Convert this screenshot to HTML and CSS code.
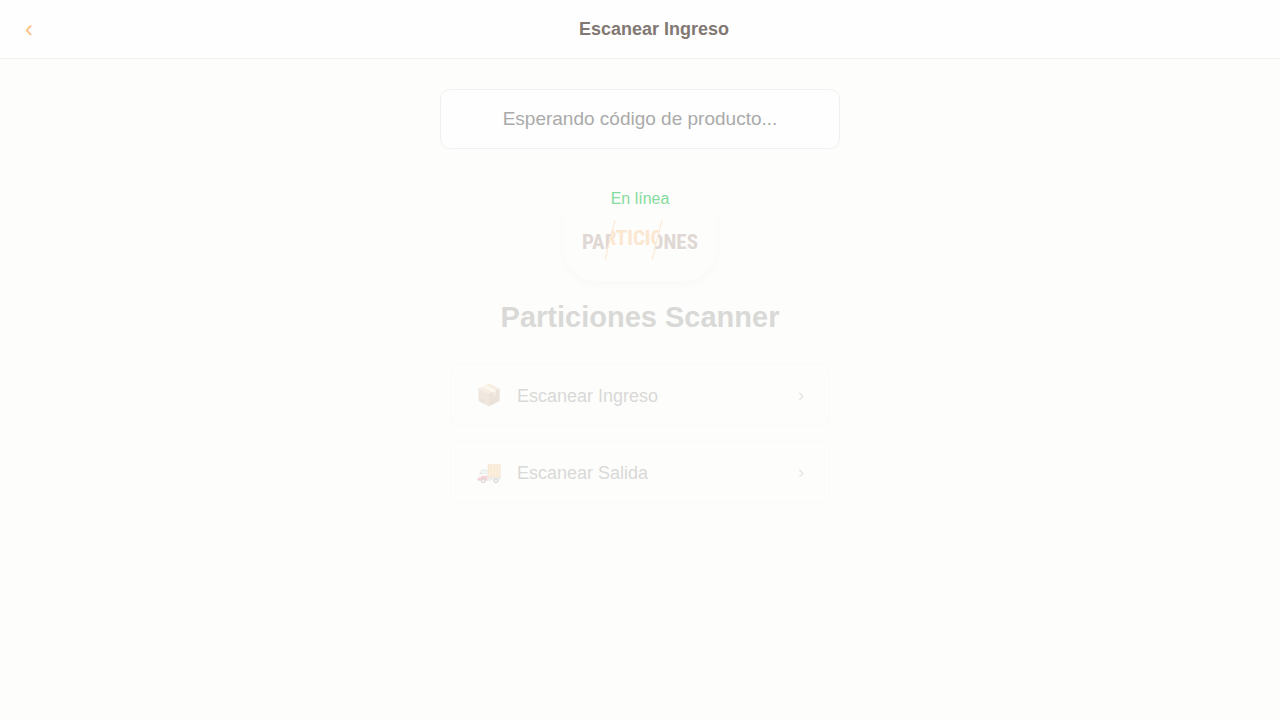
FILE: index.html
```html
<!DOCTYPE html>
<html lang="es">
<head>
<meta charset="utf-8">
<meta name="viewport" content="width=device-width, initial-scale=1">
<title>Escanear Ingreso</title>
<link rel="stylesheet" href="styles.css">
</head>
<body>
<header class="header">
  <button class="back" type="button" aria-label="Volver">‹</button>
  <h1 class="header-title">Escanear Ingreso</h1>
</header>
<main class="main">
  <input class="scan-input" type="text" aria-label="Código de producto" placeholder="Esperando código de producto...">
  <p class="status">En línea</p>
  <section class="home">
    <div class="logo-card">
      <svg class="logo" viewBox="0 0 120 44" role="img" aria-label="Particiones">
        <defs>
          <clipPath id="left"><path d="M0 0H35L24 44H0z"/></clipPath>
          <clipPath id="middle"><path d="M35 0H82L71 44H24z"/></clipPath>
          <clipPath id="right"><path d="M82 0H120V44H71z"/></clipPath>
        </defs>
        <g clip-path="url(#left)"><text class="logo-dark" x="2" y="31" text-anchor="start">PAR</text></g>
        <g clip-path="url(#middle)"><text class="logo-orange" x="54" y="27" text-anchor="middle">RTICIO</text></g>
        <g clip-path="url(#right)"><text class="logo-dark" x="118" y="31" text-anchor="end">ONES</text></g>
        <path class="logo-slash" d="M35 2 25 42M82 2 72 42"/>
      </svg>
    </div>
    <h2 class="home-title">Particiones Scanner</h2>
    <nav class="menu">
      <button class="menu-item" type="button"><span class="icon">📦</span><span class="label">Escanear Ingreso</span><span class="arrow">›</span></button>
      <button class="menu-item" type="button"><span class="icon">🚚</span><span class="label">Escanear Salida</span><span class="arrow">›</span></button>
    </nav>
  </section>
</main>
</body>
</html>
```
FILE: styles.css
```css
* { box-sizing: border-box; }
body {
  margin: 0;
  min-height: 100vh;
  background: #fdfdfb;
  font-family: "Liberation Sans", Arial, sans-serif;
}
button { font-family: inherit; cursor: pointer; }
.header {
  display: flex;
  align-items: center;
  height: 59px;
  padding: 0 16px;
  background: #fefefe;
  border-bottom: 1px solid #f0f0f0;
}
.back {
  width: 28px;
  padding: 0 10px 0 8px;
  border: 0;
  background: none;
  color: #fbc080;
  font-size: 24px;
  line-height: 28px;
}
.header-title {
  flex: 1;
  margin: 0;
  text-align: center;
  color: #827873;
  font-size: 18px;
  line-height: 24px;
}
.main {
  display: flex;
  flex-direction: column;
  align-items: center;
  padding: 30px 20px;
}
.scan-input {
  width: 100%;
  max-width: 400px;
  height: 60px;
  padding: 0 16px;
  border: 1px solid #f0f0f0;
  border-radius: 10px;
  background: #fefefe;
  font-family: inherit;
  font-size: 19px;
  text-align: center;
}
.scan-input::placeholder { color: #aaa; opacity: 1; }
.status {
  margin: 40px 0 0;
  color: #86dba0;
  font-size: 16px;
  line-height: 20px;
}
.home {
  display: flex;
  flex-direction: column;
  align-items: center;
  width: 100%;
  max-width: 380px;
}
.logo-card {
  display: flex;
  justify-content: center;
  width: 152px;
  padding: 9px 16px 19px;
  border-radius: 8px 8px 32px 32px;
  box-shadow: 0 4px 10px #faf9f8;
}
.logo { width: 120px; height: 44px; }
.logo text {
  font-family: "Roboto Condensed", "Liberation Sans Narrow", "Liberation Sans", sans-serif;
  font-weight: 700;
  font-size: 21px;
}
.logo-dark { fill: #e0d8d5; }
.logo-orange { fill: #fbe6d0; }
.logo-slash { fill: none; stroke: #fbe6d0; stroke-width: 1; }
.home-title {
  margin: 20px 0 0;
  color: #d9d9d7;
  font-size: 29px;
  line-height: 32px;
}
.menu {
  display: flex;
  flex-direction: column;
  gap: 15px;
  width: 100%;
  margin-top: 31px;
}
.menu-item {
  display: flex;
  align-items: center;
  gap: 15px;
  height: 62px;
  padding: 0 25px;
  border: 1px solid #fafaf8;
  border-radius: 10px;
  background: #fdfdfc;
  color: #d9d9d7;
  font-size: 18px;
  text-align: left;
}
.icon { width: 26px; font-size: 21px; line-height: 28px; opacity: .17; color: #000; }
.label { flex: 1; padding-top: 2px; }
.arrow { color: #e6e6e4; }
```
